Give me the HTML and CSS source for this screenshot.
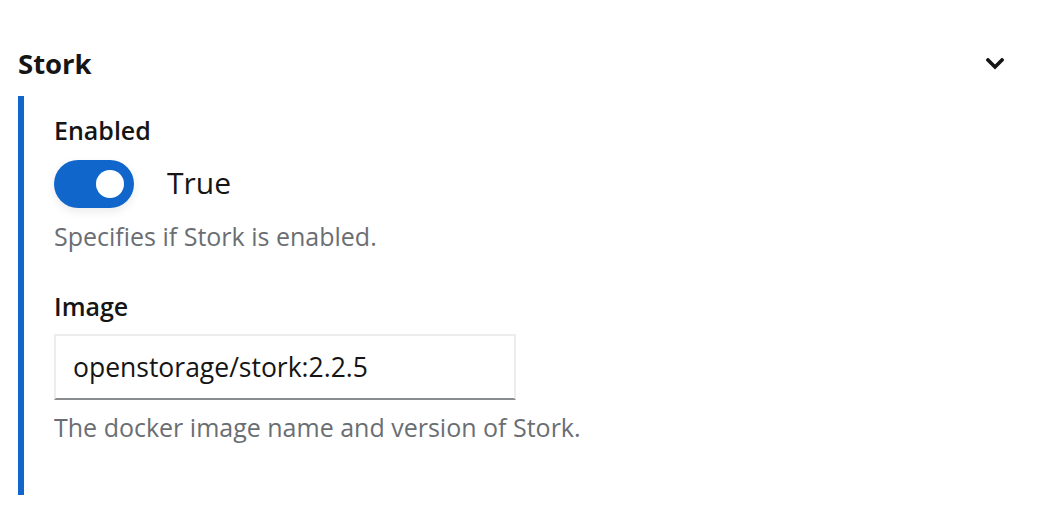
FILE: index.html
```html
<!DOCTYPE html>
<html>
<head>
<meta charset="utf-8">
<link rel="stylesheet" href="styles.css">
</head>
<body>
<section class="group">
  <div class="group-header">
    <h2 class="group-title">Stork</h2>
    <button class="toggle-btn" aria-label="Collapse">
      <svg width="18" height="12" viewBox="0 0 18 12"><path d="M2 2 L9 9 L16 2" fill="none" stroke="#151515" stroke-width="3.6" stroke-linecap="square"/></svg>
    </button>
  </div>
  <div class="group-body">
    <div class="field">
      <div class="label">Enabled</div>
      <label class="switch">
        <span class="switch-toggle"><span class="switch-knob"></span></span>
        <span class="switch-text">True</span>
      </label>
      <div class="helper">Specifies if Stork is enabled.</div>
    </div>
    <div class="field">
      <div class="label">Image</div>
      <input class="text-input" type="text" value="openstorage/stork:2.2.5">
      <div class="helper helper-input">The docker image name and version of Stork.</div>
    </div>
  </div>
</section>
</body>
</html>
```
FILE: styles.css
```css
html, body {
  margin: 0;
  padding: 0;
  background: #fff;
}
body {
  font-family: "Open Sans", "Liberation Sans", sans-serif;
  color: #151515;
}
.group {
  padding: 44px 48px 0 18px;
}
.group-header {
  display: flex;
  align-items: center;
  justify-content: space-between;
  height: 40px;
}
.group-title {
  margin: 0;
  font-size: 27.5px;
  font-weight: 700;
  line-height: 40px;
}
.toggle-btn {
  border: 0;
  background: none;
  padding: 0;
  display: flex;
}
.group-body {
  margin-top: 12px;
  border-left: 6px solid #1166cc;
  padding: 16px 0 50px 30px;
}
.field + .field {
  margin-top: 34px;
}
.label {
  font-size: 25px;
  font-weight: 600;
  line-height: 36px;
}
.switch {
  display: flex;
  align-items: center;
  margin-top: 12px;
  height: 48px;
}
.switch-toggle {
  flex: none;
  width: 80px;
  height: 48px;
  border-radius: 24px;
  background: #1166cc;
  position: relative;
  box-shadow: 0 4px 10px rgba(0,0,0,0.08);
}
.switch-knob {
  position: absolute;
  width: 28px;
  height: 28px;
  border-radius: 50%;
  background: #fff;
  top: 10px;
  right: 10px;
}
.switch-text {
  margin-left: 33px;
  font-size: 30px;
  line-height: 40px;
  margin-top: -2px;
}
.helper {
  margin-top: 10px;
  font-size: 25px;
  color: #6a6e73;
  line-height: 36px;
}
.helper-input {
  margin-top: 9px;
}
.text-input {
  display: block;
  box-sizing: border-box;
  margin-top: 10px;
  width: 462px;
  height: 66px;
  border: 2px solid #ededed;
  border-bottom-color: #8a8d90;
  padding: 0 17px;
  font-family: inherit;
  font-size: 26.5px;
  color: #151515;
  outline: none;
}
```
